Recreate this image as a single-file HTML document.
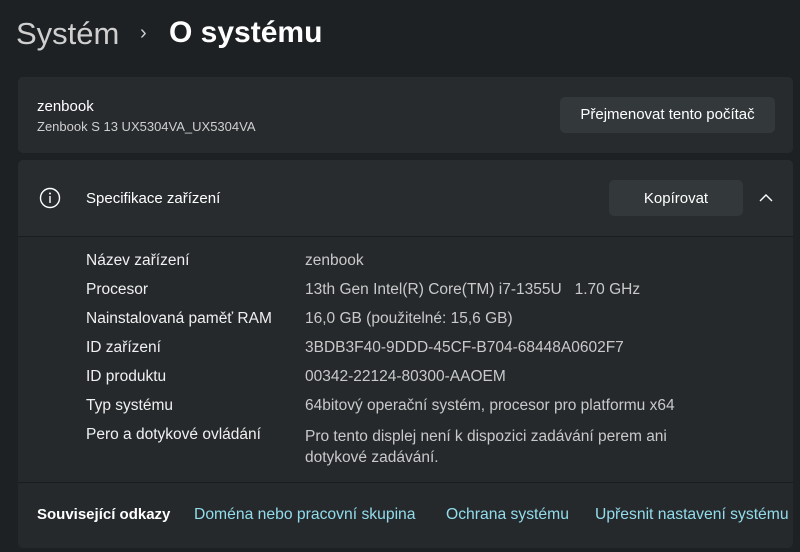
<!DOCTYPE html>
<html><head><meta charset="utf-8"><style>
body{margin:0;width:800px;height:552px;background:#1d2124;font-family:"Liberation Sans","DejaVu Sans",sans-serif;color:#fff;overflow:hidden;position:relative}
.abs{position:absolute;white-space:nowrap}
.card{position:absolute;left:18px;width:775px;background:#272b2e;border-radius:5px}
.btn{position:absolute;background:#33383b;border-radius:5px;color:#fff;font-size:15px;text-align:center}
.lab{position:absolute;left:86px;font-size:15.5px;color:#f0f0f0}
.val{position:absolute;left:305px;font-size:15.5px;color:#c9c9c9}
.link{color:#93dcec;font-size:15.7px;position:absolute;top:506px}
</style></head><body>
<div class="abs" style="left:16px;top:16px;font-size:31px;color:#cfcfcf">Systém</div>
<div class="abs" style="left:140px;top:22px;font-size:20px;color:#cfcfcf">›</div>
<div class="abs" style="left:169px;top:16px;font-size:30px;font-weight:bold;color:#fff">O systému</div>

<div class="card" style="top:77px;height:76px"></div>
<div class="abs" style="left:37px;top:98px;font-size:15px">zenbook</div>
<div class="abs" style="left:37px;top:119px;font-size:13px;color:#cfcfcf">Zenbook S 13 UX5304VA_UX5304VA</div>
<div class="btn" style="left:560px;top:97px;width:215px;height:36px;line-height:36px">Přejmenovat tento počítač</div>

<div class="card" style="top:160px;height:388px;background:#25292c"></div>
<div class="abs" style="left:18px;top:160px;width:775px;height:76px;background:#282c2f;border-radius:5px 5px 0 0"></div>
<div class="abs" style="left:18px;top:236px;width:775px;height:1px;background:#1a1d1f"></div>
<div class="abs" style="left:18px;top:482px;width:775px;height:1px;background:#1a1d1f"></div>
<svg class="abs" style="left:39px;top:187px" width="22" height="22" viewBox="0 0 22 22"><circle cx="11" cy="11" r="9.5" fill="none" stroke="#fff" stroke-width="1.4"/><rect x="10.3" y="9" width="1.4" height="7" fill="#fff"/><circle cx="11" cy="6.5" r="1" fill="#fff"/></svg>
<div class="abs" style="left:86px;top:190px;font-size:15px">Specifikace zařízení</div>
<div class="btn" style="left:609px;top:180px;width:134px;height:36px;line-height:37px">Kopírovat</div>
<svg class="abs" style="left:758px;top:193px" width="16" height="10" viewBox="0 0 16 10"><path d="M2 8 L8 2 L14 8" fill="none" stroke="#fff" stroke-width="1.4"/></svg>

<div class="lab" style="top:252px">Název zařízení</div><div class="val" style="top:252px">zenbook</div>
<div class="lab" style="top:281px">Procesor</div><div class="val" style="top:281px">13th Gen Intel(R) Core(TM) i7-1355U&nbsp;&nbsp;&nbsp;1.70 GHz</div>
<div class="lab" style="top:310px">Nainstalovaná paměť RAM</div><div class="val" style="top:310px">16,0 GB (použitelné: 15,6 GB)</div>
<div class="lab" style="top:339px">ID zařízení</div><div class="val" style="top:339px">3BDB3F40-9DDD-45CF-B704-68448A0602F7</div>
<div class="lab" style="top:368px">ID produktu</div><div class="val" style="top:368px">00342-22124-80300-AAOEM</div>
<div class="lab" style="top:397px">Typ systému</div><div class="val" style="top:397px">64bitový operační systém, procesor pro platformu x64</div>
<div class="lab" style="top:426px">Pero a dotykové ovládání</div><div class="val" style="top:426px;line-height:21px">Pro tento displej není k dispozici zadávání perem ani<br>dotykové zadávání.</div>

<div class="abs" style="left:37px;top:506px;font-size:15px;font-weight:bold">Související odkazy</div>
<div class="link" style="left:194px">Doména nebo pracovní skupina</div>
<div class="link" style="left:446px">Ochrana systému</div>
<div class="link" style="left:595px">Upřesnit nastavení systému</div>
</body></html>
